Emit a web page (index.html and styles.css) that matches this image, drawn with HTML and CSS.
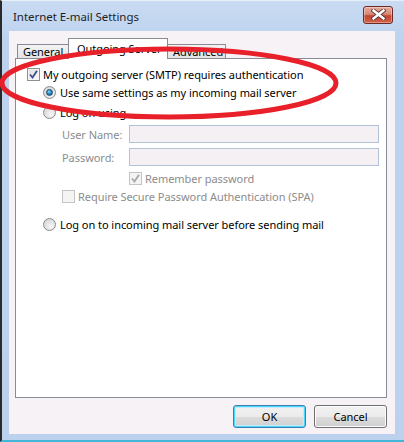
FILE: index.html
```html
<!DOCTYPE html>
<html>
<head>
<meta charset="utf-8">
<link rel="stylesheet" href="styles.css">
</head>
<body>
<div class="window">
  <div class="titlebar">
    <span class="title">Internet E-mail Settings</span>
    <div class="close">
      <svg width="15" height="11" viewBox="0 0 15 11">
        <path d="M2.5 1.5 L12.5 9.5 M12.5 1.5 L2.5 9.5" stroke="#5a3a3a" stroke-width="4.2" stroke-linecap="square" fill="none"/>
        <path d="M2.5 1.5 L12.5 9.5 M12.5 1.5 L2.5 9.5" stroke="#ffffff" stroke-width="2.4" stroke-linecap="square" fill="none"/>
      </svg>
    </div>
  </div>
  <div class="client">
    <div class="tabs">
      <div class="tab t1">General</div>
      <div class="tab active">Outgoing Server</div>
      <div class="tab t3">Advanced</div>
    </div>
    <div class="panel">
      <div class="row r1">
        <span class="check checked"><svg width="9" height="9" viewBox="0 0 9 9"><path d="M1 4.5 L3.5 7.5 L8 0.8" stroke="#3c4d8c" stroke-width="1.8" fill="none"/></svg></span>
        <span class="label">My outgoing server (SMTP) requires authentication</span>
      </div>
      <div class="row r2 indent1">
        <span class="radio on"><span class="dot"></span></span>
        <span class="label">Use same settings as my incoming mail server</span>
      </div>
      <div class="row r3 indent1">
        <span class="radio"></span>
        <span class="label">Log on using</span>
      </div>
      <div class="field r4">
        <span class="flabel">User Name:</span>
        <span class="input"></span>
      </div>
      <div class="field r5">
        <span class="flabel">Password:</span>
        <span class="input"></span>
      </div>
      <div class="row r6 indent3">
        <span class="check disabled"><svg width="9" height="9" viewBox="0 0 9 9"><path d="M1 4.5 L3.5 7.5 L8 0.8" stroke="#a8a8a8" stroke-width="1.8" fill="none"/></svg></span>
        <span class="label gray">Remember password</span>
      </div>
      <div class="row r7 indent2">
        <span class="check disabled"></span>
        <span class="label gray">Require Secure Password Authentication (SPA)</span>
      </div>
      <div class="row r8 indent1">
        <span class="radio"></span>
        <span class="label">Log on to incoming mail server before sending mail</span>
      </div>
    </div>
    <div class="buttons">
      <div class="btn default">OK</div>
      <div class="btn">Cancel</div>
    </div>
  </div>
  <svg class="annot" width="404" height="442" viewBox="0 0 404 442">
    <ellipse cx="169" cy="83" rx="167" ry="34" fill="none" stroke="#e8202a" stroke-width="5"/>
  </svg>
</div>
</body>
</html>
```

FILE: styles.css
```css
* { box-sizing: border-box; }
html, body { margin: 0; padding: 0; }
body {
  width: 404px;
  height: 442px;
  overflow: hidden;
  font-family: "Noto Sans", "Open Sans", sans-serif;
  font-size: 11px;
  letter-spacing: -0.05px;
  color: #000;
}
.window {
  position: relative;
  width: 404px;
  height: 442px;
  background: linear-gradient(to bottom, #c9dbf2 0px, #bcd2ee 40px, #bcd1ed 100%);
  border-left: 2px solid #2a2a2a;
  border-top: 1px solid #e8eef6;
  border-bottom: 2px solid #42b6d8;
  display: flex;
  flex-direction: column;
}
.titlebar {
  height: 30px;
  display: flex;
  align-items: center;
  padding-left: 11px;
  padding-right: 11px;
  justify-content: space-between;
}
.title {
  font-size: 11.5px;
  color: #1e1e1e;
  margin-top: 1px;
}
.close {
  width: 30px;
  height: 18px;
  border: 1px solid #6b2b24;
  border-radius: 3px;
  background: linear-gradient(to bottom, #e9a99a 0%, #d98a78 45%, #c2452f 55%, #d3624a 100%);
  display: flex;
  align-items: center;
  justify-content: center;
  box-shadow: inset 0 0 0 1px rgba(255,255,255,0.35);
  margin-top: -3px;
}
.client {
  margin-left: 7px;
  margin-right: 9px;
  height: 403px;
  background: #f6f2f6;
  padding: 7px 8px 6px 6px;
  display: flex;
  flex-direction: column;
}
.tabs {
  display: flex;
  align-items: flex-end;
  height: 20px;
  padding-left: 2px;
  position: relative;
  z-index: 2;
}
.tab {
  height: 14px;
  border: 1px solid #898c95;
  border-bottom: none;
  background: linear-gradient(to bottom, #f3f3f3, #e3e3e3);
  padding: 0 6px;
  line-height: 14px;
  margin-right: -1px;
  position: relative;
  white-space: nowrap;
  overflow: hidden;
}
.t1 { width: 52px; padding-left: 5px; padding-right: 0; }
.tab.active {
  height: 21px;
  width: 100px;
  background: #fff;
  padding-top: 3px;
  padding-left: 8px;
  margin-bottom: -1px;
  z-index: 3;
}
.t3 { width: 59px; padding-left: 5px; }
.panel {
  height: 341px;
  background: #fff;
  border: 1px solid #898c95;
  position: relative;
  z-index: 1;
  padding-top: 9px;
}
.row {
  display: flex;
  align-items: center;
  height: 13px;
}
.indent1 { padding-left: 27px; }
.indent2 { padding-left: 46px; }
.indent3 { padding-left: 113px; }
.r1 { padding-left: 11px; }
.r2 { margin-top: 5px; }
.r3 { margin-top: 7px; }
.r4 { margin-top: 6px; }
.r5 { margin-top: 5px; }
.r6 { margin-top: 6px; }
.r7 { margin-top: 5px; }
.r8 { margin-top: 15px; }
.label { margin-left: 3px; white-space: nowrap; line-height: 13px; }
.r2 .label, .r3 .label, .r8 .label { margin-left: 4px; }
.gray { color: #8c8c8c; }
.check {
  width: 13px;
  height: 13px;
  border: 1px solid #8f8f8f;
  background: linear-gradient(135deg, #dcdcdc, #fbfbfb);
  box-shadow: inset 0 0 0 1px #f4f4f4;
  display: flex;
  align-items: center;
  justify-content: center;
  flex: none;
}
.check.disabled {
  border-color: #c4c4c4;
  background: #f4f4f4;
}
.radio {
  width: 13px;
  height: 13px;
  border-radius: 50%;
  border: 1px solid #8a8a8a;
  background: radial-gradient(circle at 65% 70%, #f6f6f6 0%, #dedede 60%, #cfcfcf 100%);
  display: flex;
  align-items: center;
  justify-content: center;
  flex: none;
}
.dot {
  width: 7px;
  height: 7px;
  border-radius: 50%;
  background: radial-gradient(circle at 40% 35%, #8fe1f5 0%, #2a8bc8 45%, #0b4a82 100%);
  border: 1px solid #174e74;
}
.field {
  display: flex;
  align-items: center;
  height: 18px;
  padding-left: 46px;
}
.flabel {
  width: 67px;
  color: #8c8c8c;
  white-space: nowrap;
}
.input {
  width: 250px;
  height: 18px;
  border: 1px solid #b3c3d7;
  background: #f4f0f4;
}
.buttons {
  display: flex;
  justify-content: flex-end;
  gap: 8px;
  margin-top: 7px;
}
.btn {
  width: 73px;
  height: 23px;
  border: 1px solid #707070;
  border-radius: 3px;
  background: linear-gradient(to bottom, #f2f2f2 0%, #ebebeb 50%, #dddddd 51%, #cfcfcf 100%);
  box-shadow: inset 0 0 0 1px #fcfcfc;
  display: flex;
  align-items: center;
  justify-content: center;
}
.btn.default {
  border-color: #3c7fb1;
  box-shadow: inset 0 0 0 1px #48d8fb, inset 0 0 0 2px #c6eafc;
}
.annot {
  position: absolute;
  left: -2px;
  top: -1px;
  pointer-events: none;
  z-index: 10;
}
```
